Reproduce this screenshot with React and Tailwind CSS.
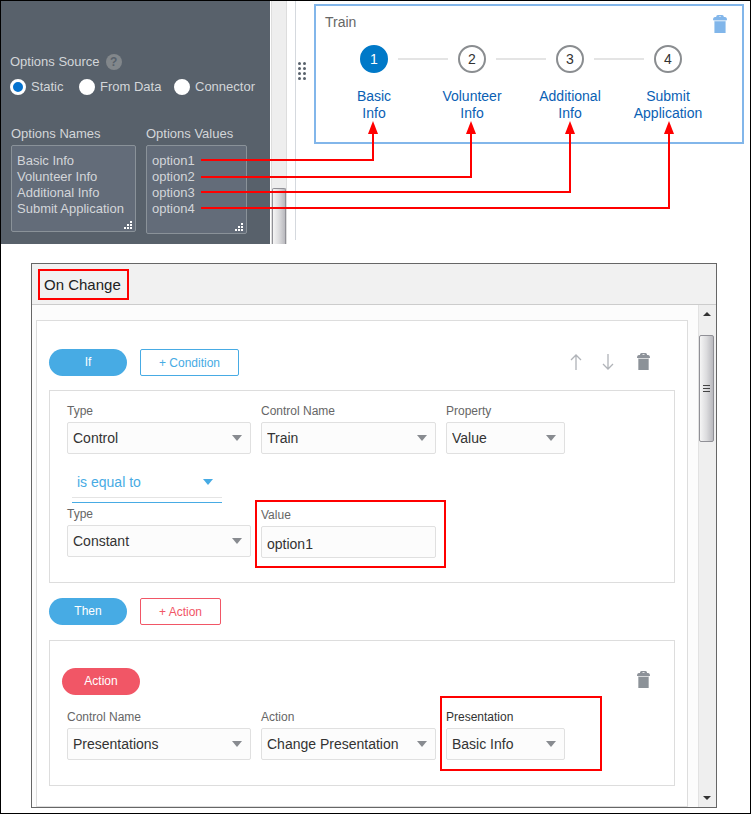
import { useState } from "react";

const STEPS = ["Basic Info", "Volunteer Info", "Additional Info", "Submit Application"];

export default function App() {
  return (
    <div className="mr-px min-h-screen border border-black bg-white font-['Liberation_Sans',Arial,sans-serif] text-[#333]">
      <Designer />
      <EventDialog />
    </div>
  );
}

function Designer() {
  return (
    <div className="relative flex h-[243px]">
      <OptionsPanel />

      {/* SCROLLBAR */}
      <div className="ml-px flex w-4 flex-col justify-end border-x border-[#ddd] bg-[#eee]">
        <div className="h-[56px] rounded-t-xs border border-b-0 border-[#909096] bg-linear-to-r from-[#f5f5f5] via-[#dcdcde] to-[#b9b9be]" />
      </div>

      <div className="mb-1 ml-2 border-l border-[#d5d9de]" />
      <DragHandle />
      <TrainCard />
      <Connections />
    </div>
  );
}

function OptionsPanel() {
  const [source, setSource] = useState("static");

  return (
    <div className="w-[269px] shrink-0 bg-[#58616b] pl-[9px] text-[13px] leading-4 text-[#d3d6d9]">
      <div className="flex items-center gap-1.5 pt-[53px]">
        <span>Options Source</span>
        <button
          type="button"
          aria-label="Help"
          className="size-4 rounded-full bg-[#82878b] text-[12px] leading-4 font-bold text-[#58616b]"
        >
          ?
        </button>
      </div>

      <div className="mt-[9px] flex">
        <Radio label="Static" width="w-[69px]" checked={source === "static"} onChange={() => setSource("static")} />
        <Radio label="From Data" width="w-[95px]" checked={source === "data"} onChange={() => setSource("data")} />
        <Radio label="Connector" width="w-[90px]" checked={source === "connector"} onChange={() => setSource("connector")} />
      </div>

      <div className="mt-[31px] ml-px flex gap-2.5">
        <OptionList
          id="names"
          label="Options Names"
          size="w-[125px] h-[87px]"
          text={"Basic Info\nVolunteer Info\nAdditional Info\nSubmit Application"}
        />
        <OptionList
          id="values"
          label="Options Values"
          size="w-[101px] h-[89px]"
          text={"option1\noption2\noption3\noption4"}
        />
      </div>
    </div>
  );
}

function Radio({ label, width, checked, onChange }) {
  return (
    <label className={`flex items-center gap-[5px] whitespace-nowrap ${width}`}>
      <input
        type="radio"
        name="source"
        checked={checked}
        onChange={onChange}
        className="size-4 shrink-0 appearance-none rounded-full border-[3px] border-white bg-white checked:bg-[#0572ce]"
      />
      {label}
    </label>
  );
}

function OptionList({ id, label, size, text }) {
  return (
    <div>
      <label htmlFor={id} className="block">
        {label}
      </label>
      <div className={`relative mt-[3px] ${size}`}>
        <textarea
          id={id}
          defaultValue={text}
          className="block size-full resize-none overflow-hidden rounded-xs border border-[#8a9299] bg-[#636c79] px-[5px] py-[7px] whitespace-pre"
        />
        <svg className="absolute right-1 bottom-[3px] size-2" viewBox="0 0 8 8" fill="#fff">
          <path d="M6 0h2v2H6zM3 3h2v2H3zM6 3h2v2H6zM0 6h2v2H0zM3 6h2v2H3zM6 6h2v2H6z" />
        </svg>
      </div>
    </div>
  );
}

function DragHandle() {
  return (
    <svg className="mt-[61px] ml-0.5 h-[18px] w-2 shrink-0" viewBox="0 0 8 18" fill="#58616b">
      {[1.5, 6.5, 11.5, 16.5].map((y) => (
        <g key={y}>
          <circle cx="1.5" cy={y} r="1.5" />
          <circle cx="6.5" cy={y} r="1.5" />
        </g>
      ))}
    </svg>
  );
}

function TrainCard() {
  return (
    <div className="mt-[3px] mr-1.5 ml-2 h-[140px] flex-1 border-2 border-[#82b6ea]">
      <div className="flex justify-between pt-2 pr-[15px] pl-[9px]">
        <h2 className="text-sm leading-4 text-[#666]">Train</h2>
        <button type="button" aria-label="Delete train" className="pt-px text-[#82b6ea]">
          <Trash className="h-[18px] w-[14px]" />
        </button>
      </div>

      <ol className="mt-3 flex pl-[9px]">
        {STEPS.map((step, i) => (
          <Step key={step} number={i + 1} label={step} />
        ))}
      </ol>
    </div>
  );
}

function Step({ number, label }) {
  const active = number === 1;
  return (
    <li className="relative flex w-[98px] flex-col items-center">
      {!active && <span className="absolute top-[13px] right-[73px] h-0.5 w-[50px] bg-[#e4e4e4]" />}
      <span
        className={`flex size-7 items-center justify-center rounded-full border-2 text-sm ${
          active ? "border-[#0079c8] bg-[#0079c8] text-white" : "border-[#8a8d90] bg-white text-[#333]"
        }`}
      >
        {number}
      </span>
      <a href="#" className="mt-[15px] w-20 text-center text-sm leading-[17px] text-[#0a5fb4]">
        {label.split(" ")[0]}
        <br />
        {label.split(" ")[1]}
      </a>
    </li>
  );
}

/* lines from each option value to its step */
function Connections() {
  const lines = [
    [373, 159],
    [471, 176],
    [570, 191],
    [669, 207],
  ];
  return (
    <svg className="pointer-events-none absolute top-0 left-0" width="749" height="243" fill="none">
      {lines.map(([x, y]) => (
        <g key={x}>
          <path d={`M200 ${y}H${x - 1}V130`} stroke="#f00" strokeWidth="2" />
          <path d={`M${x - 1} 120l5 13h-10z`} fill="#f00" />
        </g>
      ))}
    </svg>
  );
}

function EventDialog() {
  return (
    <div className="mt-[19px] mr-[33px] ml-[30px] flex flex-col border border-[#666]">
      <div className="border-b border-[#ccc] bg-[#f1f1f1] px-1.5 pt-[5px] pb-1">
        <h1 className="w-fit border-2 border-[#f00] py-1 pr-1.5 pl-1 text-[15px] leading-[19px] text-[#222]">
          On Change
        </h1>
      </div>

      <div className="flex bg-[#fcfcfc]">
        <div className="mt-[15px] mr-2.5 ml-1 flex-1 border border-[#ddd] bg-white px-3 pb-5">
          <div className="flex items-center pt-7">
            <Pill color="bg-[#47abe4]">If</Pill>
            <AddButton color="border-[#47abe4] text-[#47abe4]">+ Condition</AddButton>
            <div className="mb-0.5 ml-auto flex items-center gap-5 pr-[25px]">
              <Arrow label="Move up" d="M6 16V1M1 6l5-5 5 5" />
              <Arrow label="Move down" d="M6 0v15M1 10l5 5 5-5" />
              <Trashcan />
            </div>
          </div>

          <section className="mt-[14px] border border-[#ddd] px-[17px] pt-3 pb-6">
            <div className="flex gap-2.5">
              <SelectField id="type" label="Type" value="Control" width="w-[184px]" />
              <SelectField id="control" label="Control Name" value="Train" width="w-[175px]" />
              <SelectField id="property" label="Property" value="Value" width="w-[119px]" />
            </div>

            <div className="relative mt-3 ml-[5px] w-[150px] border-b border-[#47abe4] pb-1">
              <select
                aria-label="Operator"
                className="block h-8 w-full appearance-none border-b border-[#e4e4e4] pl-[5px] text-sm text-[#47abe4]"
              >
                <option>is equal to</option>
              </select>
              <Caret className="top-[13px] right-[9px] text-[#47abe4]" />
            </div>

            <div className="mt-[3px] flex gap-2.5">
              <SelectField id="type2" label="Type" value="Constant" width="w-[184px]" />
              <div className="relative w-[175px]">
                <label htmlFor="value" className="block pt-px text-xs leading-4 text-[#666]">
                  Value
                </label>
                <input
                  id="value"
                  defaultValue="option1"
                  className="mt-[3px] block h-8 w-full rounded-xs border border-[#e0e0e0] bg-[#fcfcfc] px-[5px] pt-[3px] text-sm"
                />
                <div className="pointer-events-none absolute -top-1.5 -right-2.5 -bottom-2.5 -left-1.5 border-2 border-[#f00]" />
              </div>
            </div>
          </section>

          <div className="flex items-center pt-[15px]">
            <Pill color="bg-[#47abe4]">Then</Pill>
            <AddButton color="border-[#f15666] text-[#f15666]">+ Action</AddButton>
          </div>

          <section className="mt-[15px] border border-[#ddd] pt-[27px] pb-[25px]">
            <div className="flex items-center pr-6 pl-3">
              <Pill color="bg-[#f15666]">Action</Pill>
              <div className="mb-1 ml-auto flex">
                <Trashcan />
              </div>
            </div>
            <div className="mt-3.5 flex gap-2.5 px-[17px]">
              <SelectField id="control2" label="Control Name" value="Presentations" width="w-[184px]" />
              <SelectField id="action" label="Action" value="Change Presentation" width="w-[175px]" />
              <SelectField id="presentation" label="Presentation" value="Basic Info" width="w-[119px]" highlighted />
            </div>
          </section>
        </div>

        <Scrollbar />
      </div>
    </div>
  );
}

/* HELPERS */

function Pill({ color, children }) {
  return (
    <span className={`h-[27px] w-[78px] rounded-full text-center text-xs leading-[27px] text-white ${color}`}>
      {children}
    </span>
  );
}

function AddButton({ color, children }) {
  return (
    <button type="button" className={`ml-[13px] h-[27px] rounded-xs border px-[18px] text-xs ${color}`}>
      {children}
    </button>
  );
}

function SelectField({ id, label, value, width, highlighted }) {
  return (
    <div className={`relative ${width}`}>
      <label
        htmlFor={id}
        className={`block text-xs leading-4 ${highlighted ? "text-[#333]" : "text-[#666]"}`}
      >
        {label}
      </label>
      <div className="relative mt-[3px]">
        <select
          id={id}
          className="block h-8 w-full appearance-none rounded-xs border border-[#e0e0e0] bg-[#fcfcfc] pl-[5px] text-sm text-[#333]"
        >
          <option>{value}</option>
        </select>
        <Caret className="top-[13px] right-[9px] text-[#888b90]" />
      </div>
      {highlighted && (
        <div className="pointer-events-none absolute -top-[13px] -right-[37px] -bottom-[11px] -left-1.5 border-2 border-[#f00]" />
      )}
    </div>
  );
}

function Caret({ className }) {
  return (
    <svg className={`pointer-events-none absolute h-1.5 w-2.5 ${className}`} viewBox="0 0 10 6" fill="currentColor">
      <path d="M0 0h10L5 6z" />
    </svg>
  );
}

function Arrow({ label, d }) {
  return (
    <button type="button" aria-label={label} className="text-[#b0b3b8]">
      <svg className="h-4 w-3" viewBox="0 0 12 16" fill="none" stroke="currentColor" strokeWidth="1.3">
        <path d={d} />
      </svg>
    </button>
  );
}

function Trashcan() {
  return (
    <button type="button" aria-label="Delete" className="ml-[3px] text-[#8d9299]">
      <Trash className="h-[17px] w-[13px]" />
    </button>
  );
}

function Trash({ className }) {
  return (
    <svg className={className} viewBox="0 0 13 17" preserveAspectRatio="none" fill="currentColor">
      <path
        fillRule="evenodd"
        d="M3 2V1.500Q3 0 4.500 0h4Q10 0 10 1.500V2h1q2 0 2 3H0q0-3 2-3zm2.500 0h2V1.300h-2z"
      />
      <path d="M1.500 6h10v11h-10z" />
      <path d="M1 5h11v12H1z" opacity=".35" />
    </svg>
  );
}

function Scrollbar() {
  return (
    <div className="flex w-[18px] flex-col items-start border-l border-[#e2e2e2] bg-[#efefef]">
      <svg className="mt-[7px] ml-1 h-1 w-2" viewBox="0 0 8 4" fill="#333">
        <path d="M4 0l4 4H0z" />
      </svg>
      <div className="mt-[19px] flex h-[107px] w-[15px] items-center justify-center rounded-xs border border-[#909096] bg-linear-to-r from-[#f5f5f5] via-[#dcdcde] to-[#b9b9be]">
        <svg className="h-2 w-[7px]" viewBox="0 0 7 8" fill="#444">
          <path d="M0 0h7v1H0zM0 3h7v1H0zM0 6h7v1H0z" />
        </svg>
      </div>
      <svg className="mt-auto mb-[7px] ml-1 h-1 w-2" viewBox="0 0 8 4" fill="#333">
        <path d="M0 0h8L4 4z" />
      </svg>
    </div>
  );
}
